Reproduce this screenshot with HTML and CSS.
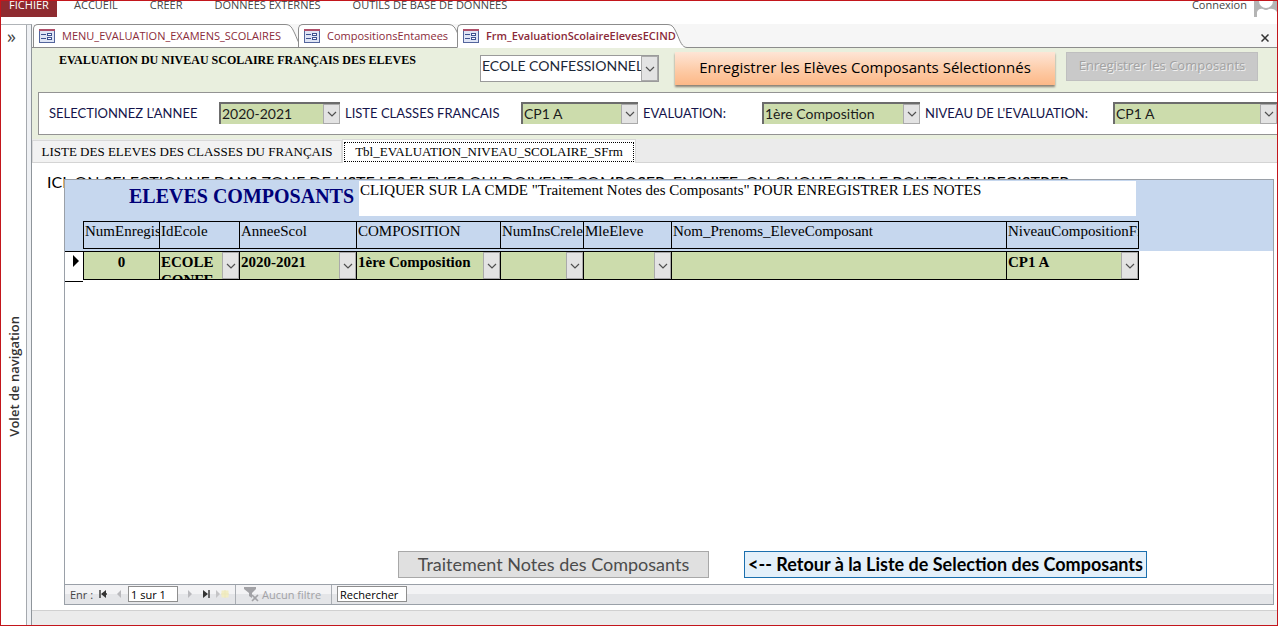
FILE: index.html
```html
<!DOCTYPE html>
<html lang="fr">
<head>
<meta charset="utf-8">
<meta name="viewport" content="width=device-width, initial-scale=1">
<title>Frm_EvaluationScolaireElevesECIND</title>
<link rel="stylesheet" href="styles.css">
</head>
<body>
<svg class="symbols" aria-hidden="true">
  <symbol id="chevron" viewBox="0 0 10 6"><path d="M1 1l4 4 4-4" fill="none" stroke="#505050" stroke-width="1.2"/></symbol>
  <symbol id="form-icon" viewBox="0 0 16 14">
    <rect x=".5" y=".5" width="15" height="13" fill="#dfe5f5" stroke="#53659c"/>
    <path d="M0 1h16" stroke="#b0506a" stroke-width="2"/>
    <path d="M2 5.500h5M2 9.500h5" stroke="#3d5290"/>
    <rect x="8.500" y="4.500" width="4" height="2" fill="#fff" stroke="#3d5290"/>
    <rect x="8.500" y="8.500" width="4" height="2" fill="#fff" stroke="#3d5290"/>
  </symbol>
  <symbol id="slope" viewBox="0 0 22 24">
    <path d="M0 .5H2C8 .5 9 4 12 10C15 17 17 23.500 22 23.500V24H0Z" fill="#fff"/>
    <path d="M0 .5H2C8 .5 9 4 12 10C15 17 17 23.500 22 23.500" fill="none" stroke="#8c8c8c"/>
  </symbol>
</svg>
<div class="window">
  <header class="ribbon">
    <nav class="ribbon-tabs">
      <button class="file-tab">FICHIER</button>
      <button class="ribbon-tab">ACCUEIL</button>
      <button class="ribbon-tab">CRÉER</button>
      <button class="ribbon-tab">DONNÉES EXTERNES</button>
      <button class="ribbon-tab">OUTILS DE BASE DE DONNÉES</button>
    </nav>
    <a class="login" href="#">Connexion
      <svg class="avatar" viewBox="0 0 23 24" aria-hidden="true"><path d="M0 0H23V24H0Z" fill="#b4b4b4"/><circle cx="12" cy="8" r="7" fill="#fff"/><path d="M3 24V19Q5 15 9 16Q12 18 15 16Q20 15 23 19V24Z" fill="#fff"/></svg>
    </a>
  </header>

  <div class="workspace">
    <aside class="nav-pane">
      <button class="expand" aria-label="Développer">»</button>
      <span class="nav-title">Volet de navigation</span>
    </aside>

    <main class="document">
      <div class="doc-tabs">
        <button class="doc-tab tab-menu"><svg class="doc-icon"><use href="#form-icon"/></svg>MENU_EVALUATION_EXAMENS_SCOLAIRES<svg class="slope"><use href="#slope"/></svg></button>
        <button class="doc-tab tab-compo"><svg class="doc-icon"><use href="#form-icon"/></svg>CompositionsEntamees<svg class="slope"><use href="#slope"/></svg></button>
        <button class="doc-tab tab-eval active"><svg class="doc-icon"><use href="#form-icon"/></svg>Frm_EvaluationScolaireElevesECIND<svg class="slope"><use href="#slope"/></svg></button>
        <button class="close" aria-label="Fermer"><svg viewBox="0 0 8 8"><path d="M.5 .5l7 7M7.500 .5l-7 7" stroke="#333" stroke-width="1.500"/></svg></button>
      </div>

      <section class="form-head">
        <div class="title-row">
          <h1 class="form-title">EVALUATION DU NIVEAU SCOLAIRE FRANÇAIS DES ELEVES</h1>
          <div class="combo school">
            <select aria-label="Ecole"><option>ECOLE CONFESSIONNELLE</option></select>
            <span class="arrow"><svg><use href="#chevron"/></svg></span>
          </div>
          <button class="save-selected">Enregistrer les Elèves Composants Sélectionnés</button>
          <button class="save-disabled" disabled>Enregistrer les Composants</button>
        </div>
        <div class="filters">
          <label for="annee">SELECTIONNEZ L'ANNEE</label>
          <div class="combo sunken"><select id="annee"><option>2020-2021</option></select><span class="arrow"><svg><use href="#chevron"/></svg></span></div>
          <label for="classe">LISTE CLASSES FRANCAIS</label>
          <div class="combo sunken"><select id="classe"><option>CP1 A</option></select><span class="arrow"><svg><use href="#chevron"/></svg></span></div>
          <label for="evaluation">EVALUATION:</label>
          <div class="combo sunken"><select id="evaluation"><option>1ère Composition</option></select><span class="arrow"><svg><use href="#chevron"/></svg></span></div>
          <label for="niveau">NIVEAU DE L'EVALUATION:</label>
          <div class="combo sunken"><select id="niveau"><option>CP1 A</option></select><span class="arrow"><svg><use href="#chevron"/></svg></span></div>
        </div>
      </section>

      <div class="page-tabs">
        <button class="page-tab">LISTE DES ELEVES DES CLASSES DU FRANÇAIS</button>
        <button class="page-tab selected"><span>Tbl_EVALUATION_NIVEAU_SCOLAIRE_SFrm</span></button>
      </div>

      <section class="page">
        <p class="hint">ICI, ON SELECTIONNE DANS ZONE DE LISTE LES ELEVES QUI DOIVENT COMPOSER, ENSUITE, ON CLIQUE SUR LE BOUTON ENREGISTRER</p>
        <div class="subform">
          <div class="sub-head">
            <h2>ELEVES COMPOSANTS</h2>
            <p>CLIQUER SUR LA CMDE "Traitement Notes des Composants" POUR ENREGISTRER LES NOTES</p>
          </div>
          <table class="records">
            <colgroup>
              <col class="c-sel"><col class="c-num"><col class="c-ecole"><col class="c-annee"><col class="c-compo"><col class="c-ins"><col class="c-mle"><col><col class="c-niveau"><col class="c-rest">
            </colgroup>
            <thead>
              <tr>
                <th></th>
                <th><span>NumEnregis</span></th>
                <th><span>IdEcole</span></th>
                <th><span>AnneeScol</span></th>
                <th><span>COMPOSITION</span></th>
                <th><span>NumInsCreleve</span></th>
                <th><span>MleEleve</span></th>
                <th><span>Nom_Prenoms_EleveComposant</span></th>
                <th class="last"><span>NiveauCompositionFrançais</span></th>
                <th></th>
              </tr>
            </thead>
            <tbody>
              <tr>
                <td class="selector"><svg viewBox="0 0 6 12"><path d="M0 0L6 6L0 12Z"/></svg></td>
                <td class="cell"><input class="number" aria-label="NumEnregis" value="0"></td>
                <td class="cell"><div class="combo"><textarea aria-label="IdEcole" rows="2">ECOLE CONFE</textarea><span class="arrow"><svg><use href="#chevron"/></svg></span></div></td>
                <td class="cell"><div class="combo"><select aria-label="AnneeScol"><option>2020-2021</option></select><span class="arrow"><svg><use href="#chevron"/></svg></span></div></td>
                <td class="cell"><div class="combo"><select aria-label="COMPOSITION"><option>1ère Composition</option></select><span class="arrow"><svg><use href="#chevron"/></svg></span></div></td>
                <td class="cell"><div class="combo"><select aria-label="NumInsCreleve"><option></option></select><span class="arrow"><svg><use href="#chevron"/></svg></span></div></td>
                <td class="cell"><div class="combo"><select aria-label="MleEleve"><option></option></select><span class="arrow"><svg><use href="#chevron"/></svg></span></div></td>
                <td class="cell"><input aria-label="Nom_Prenoms_EleveComposant"></td>
                <td class="cell last"><div class="combo"><select aria-label="NiveauComposition"><option>CP1 A</option></select><span class="arrow"><svg><use href="#chevron"/></svg></span></div></td>
                <td></td>
              </tr>
            </tbody>
          </table>
          <div class="actions">
            <button class="notes">Traitement Notes des Composants</button>
            <button class="back">&lt;-- Retour à la Liste de Selection des Composants</button>
          </div>
          <div class="record-nav">
            <span class="rec-label">Enr :</span>
            <button class="step" aria-label="Premier"><svg viewBox="0 0 8 8"><path d="M1 0V8M3 4H8" stroke="#333" stroke-width="1.400"/><path d="M7 0V8L2 4Z" fill="#333"/></svg></button>
            <button class="step" aria-label="Précédent"><svg viewBox="0 0 8 8"><path d="M6 0V8L2 4Z" fill="#b9b9bd"/></svg></button>
            <input class="position" aria-label="Enregistrement" value="1 sur 1">
            <button class="step" aria-label="Suivant"><svg viewBox="0 0 8 8"><path d="M2 0V8L6 4Z" fill="#b9b9bd"/></svg></button>
            <button class="step" aria-label="Dernier"><svg viewBox="0 0 8 8"><path d="M7 0V8" stroke="#333" stroke-width="1.400"/><path d="M1 0V8L6 4Z" fill="#333"/></svg></button>
            <button class="step new" aria-label="Nouveau"><svg viewBox="0 0 14 8"><path d="M1 0V8L5 4Z" fill="#c4c4c6"/><rect x="6.500" y=".5" width="7" height="7" fill="#f2edc4"/><path d="M10 0V8M6 4H14" stroke="#ece7bc"/></svg></button>
            <button class="filter" disabled><svg viewBox="0 0 16 16"><path d="M0 1H12V3L8 7V12L5 10V7L0 3Z" fill="#a2a2a6"/><path d="M8 9l6 6M14 9l-6 6" stroke="#a2a2a6" stroke-width="1.600"/></svg>Aucun filtre</button>
            <input class="search" aria-label="Rechercher" value="Rechercher">
          </div>
        </div>
      </section>
      <footer class="status"></footer>
    </main>
  </div>
</div>
</body>
</html>
```
FILE: styles.css
```css
* { box-sizing: border-box; }

body {
  margin: 0;
  font-family: "Open Sans", "Noto Sans", sans-serif;
  color: #000;
}

button, input, select, textarea {
  margin: 0;
  padding: 0;
  border: 0;
  border-radius: 0;
  background: none;
  font: inherit;
  color: inherit;
  appearance: none;
}

h1, h2, p { margin: 0; }

.symbols { position: absolute; width: 0; height: 0; }

.window {
  display: flex;
  flex-direction: column;
  min-height: 100vh;
  border: 1px solid #c3161c;
  background: #fff;
}

/* Ribbon */
.ribbon {
  display: flex;
  justify-content: space-between;
  height: 23px;
  overflow: hidden;
  font-size: 11px;
  line-height: 24px;
  color: #444;
}
.ribbon-tabs { display: flex; gap: 32px; margin-top: -8px; height: 24px; }
.file-tab { width: 56px; margin-right: -15px; background: #8e2b30; color: #fff; white-space: nowrap; }
.ribbon-tab { white-space: nowrap; }
.login { display: flex; gap: 7px; height: 24px; margin-top: -8px; color: #444; text-decoration: none; }
.avatar { width: 23px; height: 24px; }

/* Workspace */
.workspace { display: flex; flex: 1; }

.nav-pane {
  display: flex;
  flex-direction: column;
  align-items: center;
  width: 31px;
  flex: none;
  padding-right: 5px;
  border-top: 1px solid #b0b4b8;
  border-right: 1px solid #8f959b;
  background: linear-gradient(to left, #eff1f4 4px, #a5a9ae 4px, #a5a9ae 5px, #fff 5px);
}
.expand { height: 22px; padding-right: 4px; font-size: 18px; line-height: 18px; color: #444; }
.nav-title {
  margin-top: auto;
  margin-bottom: 188px;
  writing-mode: vertical-rl;
  transform: rotate(180deg);
  font-size: 13px;
  line-height: 18px;
  font-weight: 600;
  color: #333;
}

.document { display: flex; flex-direction: column; flex: 1; min-width: 0; }

/* Document tabs */
.doc-tabs {
  display: flex;
  height: 24px;
  padding-left: 1px;
  background: #f6f6f6;
  border-bottom: 1px solid #8c8c8c;
}
.doc-tab {
  position: relative;
  z-index: 0;
  display: flex;
  align-items: center;
  gap: 7px;
  height: 24px;
  padding: 0 0 1px 5px;
  border: 1px solid #8c8c8c;
  border-right: 0;
  border-radius: 5px 0 0 0;
  background: #fff;
  font-size: 11px;
  color: #8b2b3a;
  white-space: nowrap;
}
.tab-menu { width: 250px; margin-right: 15px; }
.tab-compo { width: 148px; margin-right: 11px; }
.tab-eval { width: 208px; }
.doc-tab.active { font-weight: 600; border-bottom-color: #fff; z-index: 1; }
.doc-icon { width: 16px; height: 14px; flex: none; }
.slope { position: absolute; z-index: -1; left: 100%; top: -1px; width: 22px; height: 24px; clip-path: inset(0 0 1px 0); }
.active .slope { clip-path: none; }
.close { width: 24px; margin-left: auto; }
.close svg { width: 8px; height: 8px; }

/* Form header */
.form-head { padding: 4px 0 4px 6px; background: #e9efde; }
.title-row { display: flex; align-items: flex-start; height: 40px; padding-left: 21px; }
.form-title {
  width: 421px;
  flex: none;
  font: bold 12px/16px "Liberation Serif", serif;
}

.combo { display: flex; align-items: stretch; min-width: 0; }
.combo select, .combo textarea { flex: 1; width: 0; min-width: 0; overflow: hidden; }
.arrow {
  display: flex;
  align-items: center;
  justify-content: center;
  width: 17px;
  flex: none;
  border: 1px solid #aaa;
  background: #e3e3e3;
}
.arrow svg { width: 10px; height: 6px; }

.school {
  width: 179px;
  flex: none;
  height: 27px;
  margin-top: 3px;
  border: 1px solid #9a9a9a;
  background: #fff;
  font: 14px/18px Lato, sans-serif;
  color: #1c2838;
}
.school select { padding: 0 0 5px 1px; }

.save-selected {
  width: 380px;
  flex: none;
  height: 33px;
  margin: 0 11px 0 16px;
  padding-bottom: 3px;
  background: linear-gradient(#fee5d6, #fdc9a3 60%, #fdb887);
  box-shadow: 0 2px 2px #8c8274;
  font-size: 15px;
  white-space: nowrap;
}
.save-disabled {
  width: 192px;
  flex: none;
  height: 29px;
  padding-bottom: 3px;
  border: 1px solid #bfbfbf;
  background: #c9c9c9;
  font-size: 13px;
  color: #a2a2a2;
  text-shadow: 1px 1px 0 #f0f0f0;
  white-space: nowrap;
}

.filters {
  display: grid;
  grid-template-columns: 170px 121px 181px 117px 124px 158px 193px 1fr;
  align-items: center;
  height: 43px;
  padding: 0 0 2px 10px;
  border: 1px solid #939393;
  border-right: 0;
  background: #fff;
  font: 14px/18px Lato, sans-serif;
  color: #14144a;
}
.filters label { font-size: 13px; white-space: nowrap; }
.filters label:not(:first-child) { padding-left: 5px; }
.sunken {
  height: 22px;
  border-top: 2px solid #6c6c6c;
  border-left: 2px solid #6c6c6c;
  background: #ccdcac;
  color: #1c1c1c;
}
.sunken select { padding-left: 1px; }

/* Page tabs */
.page-tabs {
  display: flex;
  align-items: flex-end;
  height: 24px;
  background: #ebebeb;
  border-bottom: 1px solid #d4d4d4;
  font: 13px/20px "Liberation Serif", serif;
  white-space: nowrap;
}
.page-tab { width: 310px; height: 22px; border: 1px solid #d9d9d9; border-bottom: 0; background: #f2f2f2; }
.page-tab.selected { width: 294px; height: 24px; margin-bottom: -1px; padding: 1px; background: #fff; }
.page-tab.selected span { display: block; height: 20px; border: 1px dotted #000; line-height: 18px; }

/* The subform panel lies over the lower part of the hint line */
.page { display: flex; flex-direction: column; flex: 1; padding: 11px 3px 5px 32px; }
.hint {
  height: 16px;
  margin: 0 0 -11px -17px;
  font: 16px/16px Lato, sans-serif;
  white-space: nowrap;
}

/* Subform */
.subform {
  position: relative;
  display: flex;
  flex-direction: column;
  flex: 1;
  border: 1px solid #9aa0a8;
  background: #fff;
}
.sub-head {
  display: flex;
  height: 41px;
  padding: 1px 137px 5px 64px;
  background: #c6d7ee;
  font: 15px/19px "Liberation Serif", serif;
}
.sub-head h2 { width: 230px; flex: none; font-size: 20px; line-height: 30px; color: #000078; }
.sub-head p { flex: 1; padding-left: 1px; background: #fff; }

.records {
  width: 100%;
  table-layout: fixed;
  border-spacing: 0;
  font: 15px/18px "Liberation Serif", serif;
}
.c-sel { width: 18px; }
.c-num { width: 76px; }
.c-ecole { width: 80px; }
.c-annee { width: 117px; }
.c-compo { width: 144px; }
.c-ins { width: 83px; }
.c-mle { width: 88px; }
.c-niveau { width: 133px; }
.c-rest { width: 134px; }
.records th { padding: 0 0 2px; background: #c6d7ee; font-weight: normal; text-align: left; }
.records th span {
  display: block;
  height: 28px;
  padding-left: 1px;
  border: 1px solid #000;
  border-right: 0;
  overflow: hidden;
  white-space: nowrap;
}
.records th:first-child span, .records th:last-child span { border: 0; }
.records th.last span { border-right: 1px solid #000; }
.records td { padding: 0; vertical-align: top; }
.records .selector { height: 31px; padding: 3px 0 0 8px; border: 1px solid #000; border-width: 1px 0; }
.selector svg { display: block; width: 6px; height: 12px; }
.cell .combo, .cell > input {
  width: 100%;
  height: 29px;
  border: 1px solid #000;
  border-right: 0;
  background: #ccdcac;
  font-weight: bold;
}
.cell.last .combo { border-right: 1px solid #000; }
.cell select { padding: 0 0 7px 1px; }
.cell textarea { padding: 1px 0 0 1px; line-height: 18px; resize: none; }
.cell > input { display: block; padding-bottom: 7px; }
.number { text-align: center; }

.actions {
  display: flex;
  gap: 35px;
  margin-top: auto;
  padding: 0 126px 6px 333px;
  font: 18px/24px Lato, sans-serif;
  white-space: nowrap;
}
.actions button { height: 27px; padding-bottom: 2px; border: 1px solid #a8a8a8; }
.notes { width: 311px; background: #e0e0e0; color: #4c4c4c; }
.actions .back { width: 403px; border-color: #1b6fae; background: #e4f0fa; font-weight: bold; }

.record-nav {
  display: flex;
  align-items: center;
  height: 20px;
  padding: 0 0 1px 5px;
  border-top: 1px solid #9aa0a8;
  background: linear-gradient(#f3f3f5 50%, #e4e5e8 50%);
  font-size: 11px;
  color: #444;
}
.rec-label { width: 25px; white-space: nowrap; }
.step { display: flex; justify-content: center; width: 16px; }
.step svg { width: 8px; height: 8px; }
.step.new svg { width: 14px; }
.position, .search { height: 16px; padding-left: 2px; border: 1px solid #8e8e8e; background: #fff; color: #000; }
.position { width: 50px; margin: 0 4px 0 1px; }
.search { width: 70px; margin-left: 5px; }
.filter {
  display: flex;
  align-items: center;
  gap: 2px;
  width: 97px;
  height: 19px;
  margin-left: 5px;
  padding-left: 8px;
  border: 1px solid #a9adb3;
  border-width: 0 1px;
  color: #a2a2a6;
  white-space: nowrap;
}
.filter svg { width: 16px; height: 16px; flex: none; }

.status { height: 15px; border-top: 1px solid #d0d0d0; background: #ebebeb; }
```
